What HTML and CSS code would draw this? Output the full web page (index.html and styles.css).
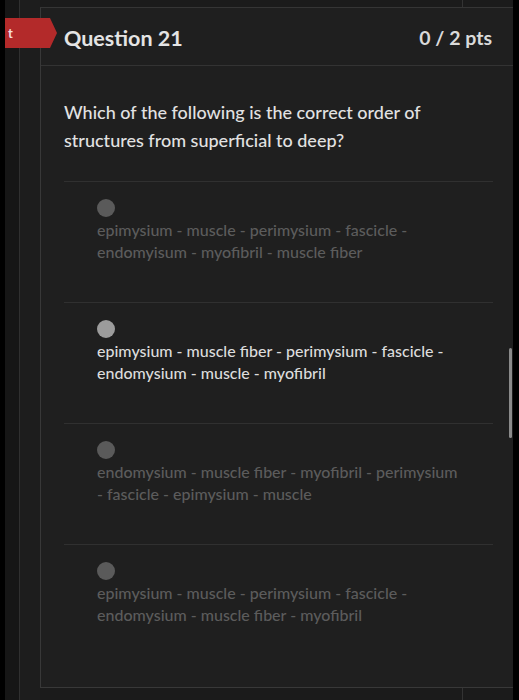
FILE: index.html
```html
<!DOCTYPE html>
<html lang="en">
<head>
<meta charset="utf-8">
<title>Question 21</title>
<link rel="stylesheet" href="styles.css">
</head>
<body>
<div class="page">
  <div class="edge"></div>
  <div class="rail"></div>
  <div class="gutter"></div>
  <div class="main">
    <div class="strip"><div class="strip-left"></div><div class="strip-right"></div></div>
    <div class="qbox">
      <div class="qhead">
        <h2 class="qtitle">Question 21</h2>
        <span class="qpts">0 / 2 pts</span>
      </div>
      <div class="qbody">
        <p class="qtext">Which of the following is the correct order of structures from superficial to deep?</p>
        <div class="answers">
          <div class="answer">
            <span class="radio"></span>
            <div class="atext">epimysium - muscle - perimysium - fascicle - endomyisum - myofibril - muscle fiber</div>
          </div>
          <div class="answer selected">
            <span class="radio"></span>
            <div class="atext">epimysium - muscle fiber - perimysium - fascicle - endomysium - muscle - myofibril</div>
          </div>
          <div class="answer">
            <span class="radio"></span>
            <div class="atext">endomysium - muscle fiber - myofibril - perimysium - fascicle - epimysium - muscle</div>
          </div>
          <div class="answer last">
            <span class="radio"></span>
            <div class="atext">epimysium - muscle - perimysium - fascicle - endomysium - muscle fiber - myofibril</div>
          </div>
        </div>
      </div>
      <div class="scrollbar"></div>
    </div>
    <div class="strip bottom"><div class="strip-left"></div><div class="strip-right"></div></div>
  </div>
  <div class="edge right"></div>
  <div class="tag">t</div>
</div>
</body>
</html>
```

FILE: styles.css
```css
* { box-sizing: border-box; }
html, body { margin: 0; padding: 0; }
body {
  background: #000;
  font-family: Lato, "Open Sans", "Liberation Sans", sans-serif;
  width: 519px;
  height: 700px;
  overflow: hidden;
}
.page {
  position: relative;
  display: flex;
  height: 700px;
}
.edge { width: 5px; background: #000; flex: none; }
.edge.right { width: 6px; }
.rail {
  width: 15px;
  flex: none;
  background: #161616;
  border-right: 1px solid #303030;
}
.gutter { width: 20px; flex: none; background: #1d1d1d; }
.main {
  flex: 1;
  display: flex;
  flex-direction: column;
  background: #1b1b1b;
}
.strip { height: 7px; display: flex; flex: none; }
.strip.bottom { flex: 1; height: auto; }
.strip-left { width: 423px; border-right: 1px solid #333; }
.strip-right { flex: 1; }
.qbox {
  position: relative;
  background: #1f1f1f;
  border-top: 1px solid #353535;
  border-left: 1px solid #383838;
  border-bottom: 1px solid #383838;
  height: 681px;
}
.qhead {
  height: 58px;
  display: flex;
  align-items: center;
  justify-content: space-between;
  padding: 2px 21px 0 23px;
  border-bottom: 1px solid #333;
}
.qtitle {
  margin: 0;
  font-size: 21.5px;
  font-weight: 700;
  color: #e4e4e4;
}
.qpts {
  font-size: 19.5px;
  font-weight: 700;
  color: #dadada;
}
.qbody { padding: 0 20px 0 23px; }
.qtext {
  margin: 0;
  padding: 32px 50px 27px 0;
  font-size: 18px;
  font-weight: 500;
  line-height: 28px;
  color: #e2e2e2;
}
.answer {
  border-top: 1px solid #303030;
  padding: 17px 0 39px 33px;
  color: #5c5c5c;
}
.answer.last { padding-bottom: 60px; }
.radio {
  display: block;
  width: 18px;
  height: 18px;
  border-radius: 50%;
  background: #5a5a5a;
  margin-bottom: 2px;
}
.atext {
  font-size: 16px;
  font-weight: 500;
  line-height: 22px;
  padding-right: 31px;
}
.answer.selected { color: #dcdcdc; }
.answer.selected .radio { background: #9c9c9c; }
.scrollbar {
  position: absolute;
  right: 1px;
  top: 340px;
  width: 3px;
  height: 90px;
  border-radius: 2px;
  background: #8a8a8a;
}
.tag {
  position: absolute;
  left: 5px;
  top: 18px;
  width: 52px;
  height: 30px;
  background: #b32a2a;
  clip-path: polygon(0 0, 45px 0, 52px 50%, 45px 100%, 0 100%);
  color: #f3dede;
  font-weight: 700;
  font-size: 13px;
  line-height: 30px;
  padding-left: 3px;
}
```
